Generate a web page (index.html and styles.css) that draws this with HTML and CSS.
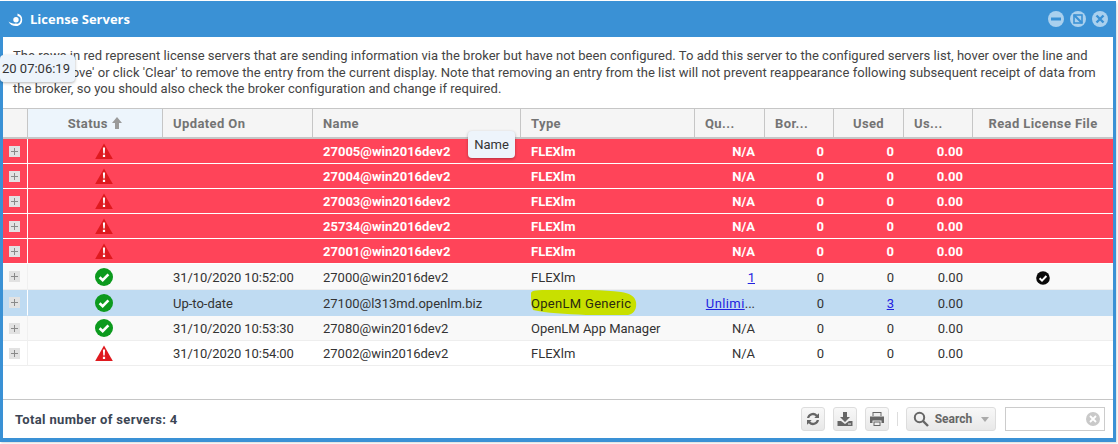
FILE: index.html
```html
<!DOCTYPE html>
<html lang="en">
<head>
<meta charset="utf-8">
<title>License Servers</title>
<link rel="stylesheet" href="styles.css">
</head>
<body>
<svg width="0" height="0" class="defs">
  <defs>
    <symbol id="warn" viewBox="0 0 18 16">
      <path d="M9 0.5 L17.8 16 H0.2 Z" fill="#df1a1f"/>
      <path d="M7.9 4.6 H10.1 L9.7 10.6 H8.3 Z M7.9 11.8 H10.1 V14 H7.9 Z" fill="#fff"/>
    </symbol>
    <symbol id="ok" viewBox="0 0 18 18">
      <circle cx="9" cy="9" r="9" fill="#0c9a1e"/>
      <path d="M4.6 9.2 L7.7 12.2 L13.4 6.4" fill="none" stroke="#fff" stroke-width="2.6"/>
    </symbol>
  </defs>
</svg>
<div class="window">
  <header class="titlebar">
    <svg class="logo" width="16" height="16" viewBox="0 0 16 16"><path d="M9.500 2.500A6.500 6.500 0 0 1 9.500 15C5.500 15.500 2 14 0.500 10.500C3 12.300 5.500 13 8 12.500A3.800 3.800 0 0 0 9.500 5Z" fill="#fff"/><circle cx="8" cy="8.800" r="2.700" fill="#fff"/></svg>
    <span class="title">License Servers</span>
    <div class="winbtns">
      <svg width="16" height="16" viewBox="0 0 16 16"><circle cx="8" cy="8" r="8" fill="#a9d0ee"/><rect x="3" y="6.500" width="10" height="3" fill="#3a91d5"/></svg>
      <svg width="16" height="16" viewBox="0 0 16 16"><circle cx="8" cy="8" r="8" fill="#a9d0ee"/><rect x="4" y="4" width="8" height="8" fill="none" stroke="#3a91d5" stroke-width="1.600"/><path d="M4 4 L12 12" stroke="#3a91d5" stroke-width="2.200"/></svg>
      <svg width="16" height="16" viewBox="0 0 16 16"><circle cx="8" cy="8" r="8" fill="#a9d0ee"/><path d="M4.500 4.500 L11.500 11.500 M11.500 4.500 L4.500 11.500" stroke="#3a91d5" stroke-width="2.400"/></svg>
    </div>
  </header>
  <div class="content">
    <p class="intro">The rows in red represent license servers that are sending information via the broker but have not been configured. To add this server to the configured servers list, hover over the line and click 'Remove' or click 'Clear' to remove the entry from the current display. Note that removing an entry from the list will not prevent reappearance following subsequent receipt of data from the broker, so you should also check the broker configuration and change if required.</p>
    <table class="grid">
      <colgroup>
        <col class="c-exp"><col class="c-status"><col class="c-upd"><col class="c-name"><col class="c-type"><col class="c-q"><col class="c-b"><col class="c-u"><col class="c-us"><col class="c-read">
      </colgroup>
      <thead>
        <tr>
          <th></th>
          <th class="sorted center">Status <svg class="sort" width="10" height="12" viewBox="0 0 10 12"><path d="M5 0 L10 6 H7 V12 H3 V6 H0 Z" fill="#9a9a9a"/></svg></th>
          <th>Updated On</th>
          <th>Name</th>
          <th>Type</th>
          <th>Qu...</th>
          <th>Bor...</th>
          <th class="center">Used</th>
          <th>Us...</th>
          <th class="center">Read License File</th>
        </tr>
      </thead>
      <tbody>
        <tr class="red"><td><span class="exp"></span></td><td class="center"><svg class="ic-warn"><use href="#warn"/></svg></td><td></td><td>27005@win2016dev2</td><td>FLEXlm</td><td class="right">N/A</td><td class="right">0</td><td class="right">0</td><td class="right">0.00</td><td></td></tr>
        <tr class="red"><td><span class="exp"></span></td><td class="center"><svg class="ic-warn"><use href="#warn"/></svg></td><td></td><td>27004@win2016dev2</td><td>FLEXlm</td><td class="right">N/A</td><td class="right">0</td><td class="right">0</td><td class="right">0.00</td><td></td></tr>
        <tr class="red"><td><span class="exp"></span></td><td class="center"><svg class="ic-warn"><use href="#warn"/></svg></td><td></td><td>27003@win2016dev2</td><td>FLEXlm</td><td class="right">N/A</td><td class="right">0</td><td class="right">0</td><td class="right">0.00</td><td></td></tr>
        <tr class="red"><td><span class="exp"></span></td><td class="center"><svg class="ic-warn"><use href="#warn"/></svg></td><td></td><td>25734@win2016dev2</td><td>FLEXlm</td><td class="right">N/A</td><td class="right">0</td><td class="right">0</td><td class="right">0.00</td><td></td></tr>
        <tr class="red"><td><span class="exp"></span></td><td class="center"><svg class="ic-warn"><use href="#warn"/></svg></td><td></td><td>27001@win2016dev2</td><td>FLEXlm</td><td class="right">N/A</td><td class="right">0</td><td class="right">0</td><td class="right">0.00</td><td></td></tr>
        <tr class="alt tall"><td><span class="exp"></span></td><td class="center"><svg class="ic-ok"><use href="#ok"/></svg></td><td class="date">31/10/2020 10:52:00</td><td>27000@win2016dev2</td><td>FLEXlm</td><td class="right"><a href="#">1</a></td><td class="right">0</td><td class="right">0</td><td class="right">0.00</td><td class="center"><svg class="ic-read" viewBox="0 0 14 14"><circle cx="7" cy="7" r="6.800" fill="#0a0a0a"/><path d="M3.600 7.200 L6 9.600 L10.400 5" fill="none" stroke="#fff" stroke-width="2"/></svg></td></tr>
        <tr class="sel tall"><td><span class="exp"></span></td><td class="center"><svg class="ic-ok"><use href="#ok"/></svg></td><td>Up-to-date</td><td>27100@l313md.openlm.biz</td><td><span class="marker"><svg class="blob" width="106" height="28" viewBox="0 0 106 28"><path d="M0 4C1 1 6 1 20 1C45 0 70 1 90 3C98 4 104 7 105 13C106 20 103 25 97 26C85 27 70 27 55 26C35 25 15 24 2 21C0 15 0 9 0 4Z" fill="#c8e000"/></svg>OpenLM Generic</span></td><td class="right"><a class="unl" href="#">Unlimi</a>...</td><td class="right">0</td><td class="right"><a href="#">3</a></td><td class="right">0.00</td><td></td></tr>
        <tr class="alt"><td><span class="exp"></span></td><td class="center"><svg class="ic-ok"><use href="#ok"/></svg></td><td class="date">31/10/2020 10:53:30</td><td>27080@win2016dev2</td><td>OpenLM App Manager</td><td class="right">N/A</td><td class="right">0</td><td class="right">0</td><td class="right">0.00</td><td></td></tr>
        <tr><td><span class="exp"></span></td><td class="center"><svg class="ic-warn"><use href="#warn"/></svg></td><td class="date">31/10/2020 10:54:00</td><td>27002@win2016dev2</td><td>FLEXlm</td><td class="right">N/A</td><td class="right">0</td><td class="right">0</td><td class="right">0.00</td><td></td></tr>
      </tbody>
    </table>
  </div>
  <footer class="footer">
    <span class="total">Total number of servers: 4</span>
    <div class="tools">
      <button class="tool"><svg width="16" height="16" viewBox="0 0 16 16"><path d="M2 7a6 6 0 0 1 10.300-3.200L14 2.200V7H9.300l1.500-1.600A3.900 3.900 0 0 0 4.200 7zM14 9a6 6 0 0 1-10.300 3.200L2 13.800V9h4.700l-1.500 1.600A3.900 3.900 0 0 0 11.800 9z" fill="#666"/></svg></button>
      <button class="tool"><svg width="16" height="16" viewBox="0 0 16 16"><path d="M6 1h4v5h3l-5 5-5-5h3z" fill="#666"/><path d="M0.500 10H4l4 3 4-3h3.500v5H0.500z" fill="#666"/><rect x="11" y="12.500" width="3" height="1" fill="#eee"/></svg></button>
      <button class="tool"><svg width="16" height="16" viewBox="0 0 16 16"><path d="M3.500 1h9v4h-9z" fill="#666"/><rect x="4.500" y="2" width="7" height="3" fill="#eee"/><path d="M1 5.500h14V12h-2.500V9.500h-9V12H1z" fill="#666"/><path d="M4.500 10.500h7V15h-7z" fill="#666"/><rect x="5.500" y="11.500" width="5" height="2.500" fill="#eee"/></svg></button>
      <span class="divider"></span>
      <button class="tool search"><svg width="16" height="16" viewBox="0 0 16 16"><circle cx="6.500" cy="6.500" r="4.700" fill="none" stroke="#666" stroke-width="2"/><path d="M10 10 L15 15" stroke="#666" stroke-width="2.400"/></svg><span>Search</span><i class="caret"></i></button>
      <div class="searchbox"><svg width="14" height="14" viewBox="0 0 14 14"><circle cx="7" cy="7" r="7" fill="#c9c9c9"/><path d="M4 4 L10 10 M10 4 L4 10" stroke="#fff" stroke-width="1.800"/></svg></div>
    </div>
  </footer>
</div>
<div class="tip tip-time">20 07:06:19</div>
<div class="tip tip-name">Name</div>
</body>
</html>
```
FILE: styles.css
```css
* { box-sizing: border-box; }
html, body { margin: 0; padding: 0; }
body {
  width: 1118px;
  height: 444px;
  background: #fff;
  font-family: Roboto, "Liberation Sans", sans-serif;
  font-size: 13px;
  color: #333;
  position: relative;
  overflow: hidden;
  padding-top: 1px;
}
.defs { position: absolute; }
.window {
  width: 1116px;
  height: 441px;
  background: #fff;
  border: 3px solid #3a91d5;
  border-top: 0;
  border-bottom-width: 4px;
  border-radius: 3px 3px 0 0;
  box-shadow: 1px 1px 2px rgba(0,0,0,.15);
  display: flex;
  flex-direction: column;
}
.titlebar {
  height: 36px;
  flex: none;
  background: #3a91d5;
  margin: 0 -3px;
  padding: 0 8px;
  display: flex;
  align-items: center;
  color: #fff;
}
.logo { margin-right: 6px; }
.title { font: bold 13px "Open Sans", sans-serif; }
.winbtns { margin-left: auto; display: flex; gap: 6px; }
.content { flex: 1; min-height: 0; }
.intro {
  margin: 0;
  height: 71px;
  padding: 11px 10px 0;
  line-height: 16.5px;
  font-size: 13px;
  letter-spacing: .035px;
  color: #444;
}
.grid {
  width: 1110px;
  table-layout: fixed;
  border-collapse: separate;
  border-spacing: 0;
}
.c-exp { width: 25px; }
.c-status { width: 135px; }
.c-upd { width: 150px; }
.c-name { width: 208px; }
.c-type { width: 174px; }
.c-q { width: 70px; }
.c-b { width: 69px; }
.c-u { width: 70px; }
.c-us { width: 69px; }
.c-read { width: 140px; }
th {
  height: 31px;
  background: #f5f5f5;
  border-top: 1px solid #c6c6c6;
  border-right: 1px solid #c6c6c6;
  border-bottom: 2px solid #c6c6c6;
  padding: 0 10px;
  font-weight: bold;
  font-size: 13px;
  letter-spacing: .4px;
  color: #747474;
  text-align: left;
  white-space: nowrap;
}
th:last-child { border-right: 0; }
th.sorted { background: #edf5fc; }
th.center, td.center { text-align: center; }
.sort { vertical-align: -1px; margin-left: 1px; }
td {
  height: 25px;
  padding: 1px 10px 0;
  border-bottom: 1px solid #eee;
  white-space: nowrap;
  overflow: hidden;
  color: #333;
  line-height: 23px;
}
.tall td { height: 26px; }
td.date { letter-spacing: -.1px; }
td:first-child { padding: 0 2px 0 0; text-align: center; border-right: 1px solid #f0f0f0; }
td.right { text-align: right; }
.red td { background: #ff4459; color: #fff; font-weight: bold; border-bottom-color: #fff; }
.red td:first-child { border-right-color: #fff; }
.alt td { background: #f9f9f9; }
.sel td { background: #bfdbf2; border-bottom-color: #bfdbf2; }
.sel td:first-child { border-right-color: #fff; }
a { color: #2222e0; }
.unl { letter-spacing: .4px; }
.exp {
  display: inline-block;
  width: 11px;
  height: 11px;
  vertical-align: -1px;
  background:
    linear-gradient(#8a8a8a, #8a8a8a) center / 7px 1px no-repeat,
    linear-gradient(#8a8a8a, #8a8a8a) center / 1px 7px no-repeat,
    #e2e2e2;
}
.ic-warn { width: 18px; height: 16px; vertical-align: -3px; margin-left: 16px; }
.ic-ok { width: 18px; height: 18px; vertical-align: -4px; margin-left: 16px; }
.ic-read { width: 14px; height: 14px; vertical-align: -3px; }
.marker {
  position: relative;
  isolation: isolate;
  letter-spacing: .3px;
  color: #2a2a10;
}
.blob { position: absolute; left: 0; top: -7px; z-index: -1; }
.footer {
  height: 39px;
  flex: none;
  border-top: 1px solid #c6c6c6;
  display: flex;
  align-items: center;
  padding: 0 8px 0 12px;
}
.total { font-weight: bold; font-size: 13px; letter-spacing: .35px; color: #3c4654; }
.tools { margin-left: auto; display: flex; align-items: center; gap: 8px; }
.tool {
  height: 24px;
  width: 24px;
  padding: 0;
  border: 1px solid #ddd;
  border-radius: 3px;
  background: linear-gradient(#f8f8f8, #e8e8e8);
  display: flex;
  align-items: center;
  justify-content: center;
  font: bold 12px Roboto, sans-serif;
  color: #666;
}
.divider { width: 1px; height: 14px; background: #ddd; }
.search { width: 90px; gap: 6px; }
.caret { width: 0; height: 0; border: 4px solid transparent; border-top: 5px solid #aaa; border-bottom: 0; margin-left: 3px; }
.searchbox {
  width: 100px;
  height: 24px;
  border: 1px solid #ccc;
  display: flex;
  align-items: center;
  justify-content: flex-end;
  padding-right: 4px;
  margin-left: 1px;
}
.tip {
  position: absolute;
  background: #edf4fb;
  border-radius: 4px;
  box-shadow: 0 1px 3px rgba(0,0,0,.3);
  color: #333;
  line-height: 27px;
}
.tip-time { left: 0; top: 55px; width: 75px; height: 27px; padding-left: 2px; }
.tip-name { left: 468px; top: 131px; width: 47px; height: 27px; text-align: center; }
```
